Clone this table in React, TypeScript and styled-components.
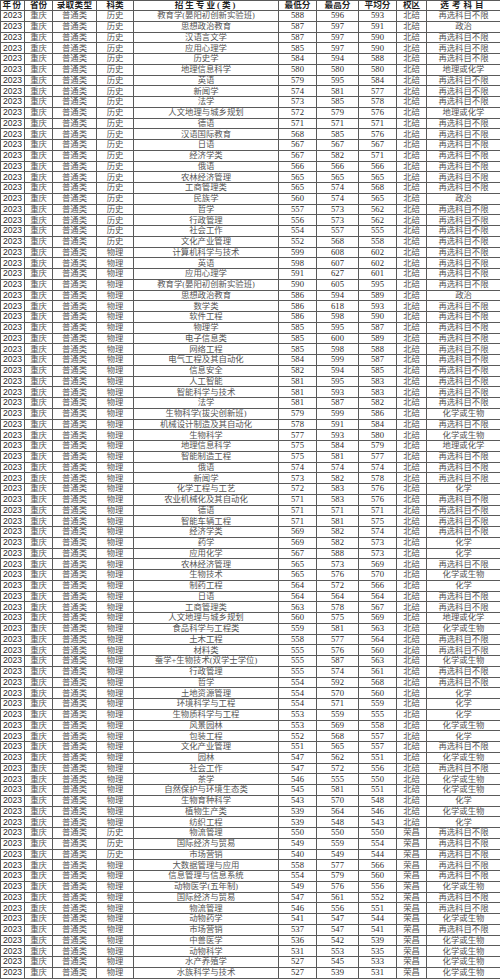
import React from "react";
import styled, { createGlobalStyle } from "styled-components";

const GlobalStyle = createGlobalStyle`
  html, body { margin: 0; padding: 0; background: #ffffff; }
  #root { width: 500px; }
`;

const SUBJ: Record<string, string> = {
  A: "再选科目不限",
  Z: "政治",
  D: "地理或化学",
  B: "化学或生物",
  C: "化学",
};
const TRACK: Record<string, string> = { H: "历史", P: "物理" };
const CAMPUS: Record<string, string> = { B: "北碚", R: "荣昌" };

const RAW = `H|B|教育学(晏阳初创新实验班)|588|596|593|A
H|B|思想政治教育|587|597|591|Z
H|B|汉语言文学|587|597|590|A
H|B|应用心理学|585|597|590|A
H|B|历史学|584|594|588|A
H|B|地理信息科学|580|580|580|D
H|B|英语|579|595|584|A
H|B|新闻学|574|581|577|A
H|B|法学|573|585|578|A
H|B|人文地理与城乡规划|572|579|576|D
H|B|德语|571|571|571|A
H|B|汉语国际教育|568|585|576|A
H|B|日语|567|567|567|A
H|B|经济学类|567|582|571|A
H|B|俄语|566|566|566|A
H|B|农林经济管理|565|565|565|A
H|B|工商管理类|565|574|568|A
H|B|民族学|560|574|565|Z
H|B|哲学|557|573|562|A
H|B|行政管理|556|573|562|A
H|B|社会工作|554|557|555|A
H|B|文化产业管理|552|568|558|A
P|B|计算机科学与技术|599|608|602|A
P|B|英语|598|607|602|A
P|B|应用心理学|591|627|601|A
P|B|教育学(晏阳初创新实验班)|590|605|595|A
P|B|思想政治教育|586|594|589|Z
P|B|数学类|586|618|593|A
P|B|软件工程|586|598|590|A
P|B|物理学|585|595|587|A
P|B|电子信息类|585|600|589|A
P|B|网络工程|585|598|588|A
P|B|电气工程及其自动化|584|599|587|A
P|B|信息安全|582|594|585|A
P|B|人工智能|581|595|583|A
P|B|智能科学与技术|581|593|583|A
P|B|法学|581|587|582|A
P|B|生物科学(拔尖创新班)|579|599|586|B
P|B|机械设计制造及其自动化|578|591|584|A
P|B|生物科学|577|593|580|B
P|B|地理信息科学|575|584|579|D
P|B|智能制造工程|575|581|577|A
P|B|俄语|574|574|574|A
P|B|新闻学|573|582|578|A
P|B|化学工程与工艺|572|583|576|C
P|B|农业机械化及其自动化|571|583|576|A
P|B|德语|571|571|571|A
P|B|智能车辆工程|571|581|575|A
P|B|经济学类|569|582|574|A
P|B|药学|569|582|573|C
P|B|应用化学|567|588|573|C
P|B|农林经济管理|565|573|569|A
P|B|生物技术|565|576|570|B
P|B|制药工程|564|572|566|C
P|B|日语|564|564|564|A
P|B|工商管理类|563|578|567|A
P|B|人文地理与城乡规划|560|575|569|D
P|B|食品科学与工程类|559|581|563|B
P|B|土木工程|558|577|564|A
P|B|材料类|555|576|560|A
P|B|蚕学+生物技术(双学士学位)|555|587|563|B
P|B|行政管理|555|574|561|A
P|B|哲学|554|592|568|A
P|B|土地资源管理|554|570|560|C
P|B|环境科学与工程|554|571|559|C
P|B|生物质科学与工程|553|559|555|C
P|B|风景园林|553|569|558|B
P|B|包装工程|552|568|557|C
P|B|文化产业管理|551|565|557|A
P|B|园林|547|562|551|B
P|B|社会工作|547|572|556|A
P|B|茶学|546|555|550|B
P|B|自然保护与环境生态类|545|581|551|B
P|B|生物育种科学|543|570|548|C
P|B|植物生产类|539|564|546|B
P|B|纺织工程|539|548|543|C
H|R|物流管理|550|550|550|A
H|R|国际经济与贸易|549|559|554|A
H|R|市场营销|540|549|544|A
P|R|大数据管理与应用|558|577|566|A
P|R|信息管理与信息系统|554|579|560|A
P|R|动物医学(五年制)|549|576|556|B
P|R|国际经济与贸易|547|561|552|A
P|R|物流管理|546|556|551|A
P|R|动物药学|541|547|544|B
P|R|市场营销|537|547|541|A
P|R|中兽医学|536|542|539|B
P|R|动物科学|531|553|535|B
P|R|水产养殖学|527|545|533|B
P|R|水族科学与技术|527|539|531|B`;

type Row = {
  track: string;
  campus: string;
  major: string;
  min: string;
  max: string;
  avg: string;
  subj: string;
};

const ROWS: Row[] = RAW.split("\n").map((line) => {
  const [t, c, major, min, max, avg, s] = line.split("|");
  return { track: TRACK[t], campus: CAMPUS[c], major, min, max, avg, subj: SUBJ[s] };
});

const COLUMNS: { label: string; width: number; spacing: number }[] = [
  { label: "年份", width: 24, spacing: 1.5 },
  { label: "省份", width: 28, spacing: 0 },
  { label: "录取类型", width: 44, spacing: 0.3 },
  { label: "科类", width: 37, spacing: 0 },
  { label: "招生专业(类)", width: 145, spacing: 2 },
  { label: "最低分", width: 38, spacing: 0 },
  { label: "最高分", width: 42, spacing: 0 },
  { label: "平均分", width: 38, spacing: 0 },
  { label: "校区", width: 30, spacing: 0 },
  { label: "选考科目", width: 74, spacing: 3 },
];

const Sheet = styled.table`
  width: 500px;
  height: 979px;
  border-collapse: collapse;
  table-layout: fixed;
  background: #ffffff;
  color: #2b2b2b;
  font-family: "Liberation Serif", "Noto Sans CJK SC", serif;
`;

const HeadCell = styled.th<{ $spacing: number }>`
  border: 1px solid #5a5a5a;
  padding: 0;
  font-size: 8.6px;
  line-height: 9px;
  font-weight: 700;
  text-align: center;
  white-space: nowrap;
  overflow: hidden;
  letter-spacing: ${(p) => p.$spacing}px;
  color: #1e1e1e;
`;

const Cell = styled.td<{ $sans?: boolean }>`
  border: 1px solid #5a5a5a;
  padding: 0;
  font-size: 8.6px;
  line-height: 9px;
  font-weight: 400;
  text-align: center;
  white-space: nowrap;
  overflow: hidden;
  font-family: ${(p) =>
    p.$sans
      ? `"Liberation Sans", "Noto Sans CJK SC", sans-serif`
      : `"Liberation Serif", "Noto Sans CJK SC", serif`};
`;

const ChineseCell = styled(Cell)`
  color: #555555;
  font-size: 8.4px;
`;

export default function App() {
  return (
    <>
      <GlobalStyle />
      <Sheet>
        <colgroup>
          {COLUMNS.map((c) => (
            <col key={c.label} style={{ width: c.width }} />
          ))}
        </colgroup>
        <thead>
          <tr>
            {COLUMNS.map((c) => (
              <HeadCell key={c.label} $spacing={c.spacing}>
                {c.label}
              </HeadCell>
            ))}
          </tr>
        </thead>
        <tbody>
          {ROWS.map((r, i) => (
            <tr key={i}>
              <Cell $sans>2023</Cell>
              <ChineseCell>重庆</ChineseCell>
              <ChineseCell>普通类</ChineseCell>
              <ChineseCell>{r.track}</ChineseCell>
              <ChineseCell>{r.major}</ChineseCell>
              <Cell>{r.min}</Cell>
              <Cell>{r.max}</Cell>
              <Cell>{r.avg}</Cell>
              <ChineseCell>{r.campus}</ChineseCell>
              <ChineseCell>{r.subj}</ChineseCell>
            </tr>
          ))}
        </tbody>
      </Sheet>
    </>
  );
}
